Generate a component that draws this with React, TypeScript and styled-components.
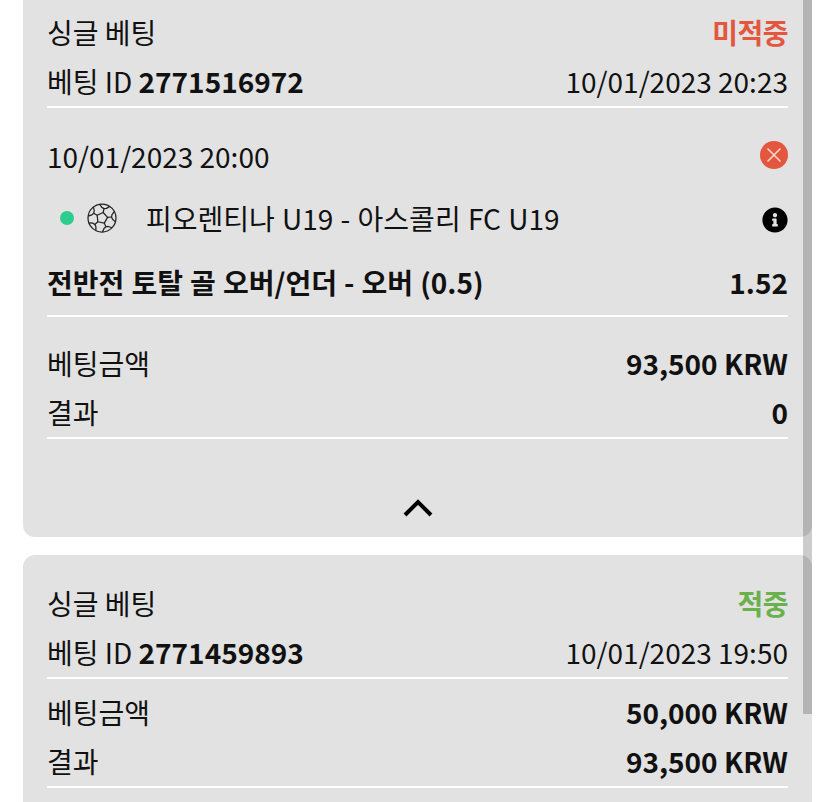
import React from "react";
import styled, { createGlobalStyle } from "styled-components";
import { FaInfoCircle } from "react-icons/fa";

const GlobalStyle = createGlobalStyle`
  html, body {
    margin: 0;
    padding: 0;
    background: #fff;
    height: 100%;
    overflow: hidden;
  }
  body {
    font-family: "Noto Sans CJK KR", "Noto Sans", sans-serif;
    color: #111;
  }
`;

const Page = styled.div`
  position: relative;
  width: 835px;
  height: 802px;
  overflow: hidden;
  padding-left: 23px;
  box-sizing: border-box;
`;

const ScrollThumb = styled.div`
  position: absolute;
  top: 0;
  left: 803px;
  width: 9px;
  height: 714px;
  background: rgba(0, 0, 0, 0.2);
`;

const Card = styled.section<{ $first?: boolean }>`
  width: 789px;
  box-sizing: border-box;
  background: #e2e2e2;
  border-radius: ${({ $first }) => ($first ? "0 0 12px 12px" : "12px 12px 0 0")};
  padding: ${({ $first }) => ($first ? "8px 24px 0" : "24px 24px 40px")};
  margin-bottom: 18px;
`;

const Row = styled.div<{ $height?: number }>`
  display: flex;
  align-items: center;
  justify-content: space-between;
  box-sizing: border-box;
  height: ${({ $height }) => $height ?? 49}px;
  padding-bottom: 2px;
  font-size: 28px;
  line-height: 1;
  white-space: nowrap;
`;

const Divider = styled.div`
  height: 2px;
  background: #fff;
`;

const Status = styled.span<{ $won?: boolean }>`
  font-weight: 700;
  letter-spacing: -0.5px;
  color: ${({ $won }) => ($won ? "#6ab04c" : "#e2573d")};
`;

const Bold = styled.b`
  font-weight: 700;
`;

const WideBold = styled(Bold)`
  word-spacing: 0.8px;
`;

const Events = styled.div`
  padding: 24px 0 5px;
`;

const Match = styled.div`
  display: flex;
  align-items: center;
  margin-left: 13px;
  word-spacing: 1px;
`;

const LiveDot = styled.span`
  width: 14px;
  height: 14px;
  border-radius: 50%;
  background: #2ecc8f;
  margin-right: 13px;
`;

const BallSvg = styled.svg`
  width: 30px;
  height: 30px;
  margin-right: 29px;
`;

const InfoIcon = styled(FaInfoCircle)`
  width: 26px;
  height: 26px;
  margin-top: 3px;
  color: #000;
`;

const LostSvg = styled.svg`
  margin-bottom: 3px;
`;

const Amounts = styled.div`
  padding-top: 22px;
`;

const CompactAmounts = styled.div`
  padding-top: 9px;
`;

const Toggle = styled.div`
  display: flex;
  justify-content: center;
  padding: 60px 0 20px;
`;

const polar = (radius: number, degrees: number) => {
  const a = (degrees * Math.PI) / 180;
  return `${(15 + radius * Math.cos(a)).toFixed(2)} ${(15 + radius * Math.sin(a)).toFixed(2)}`;
};

const SoccerBall = () => {
  const tilt = -78;
  const angles = [0, 72, 144, 216, 288].map((n) => n + tilt);
  const centre = "M" + angles.map((a) => polar(5.6, a)).join(" L") + " Z";
  const spokes = angles.map((a) => `M${polar(5.6, a)} L${polar(9.6, a)}`).join(" ");
  const patches = angles
    .map(
      (a) =>
        `M${polar(14, a - 22)} L${polar(10.6, a - 13)} L${polar(9.6, a)} L${polar(10.6, a + 13)} L${polar(14, a + 22)}`
    )
    .join(" ");
  return (
    <BallSvg viewBox="0 0 30 30" fill="none" stroke="#222" strokeWidth="1.25" strokeLinejoin="round">
      <circle cx="15" cy="15" r="14" />
      <path d={centre} />
      <path d={spokes} />
      <path d={patches} />
    </BallSvg>
  );
};

const LostIcon = () => (
  <LostSvg width="28" height="28" viewBox="0 0 28 28">
    <circle cx="14" cy="14" r="14" fill="#e2573d" />
    <path d="M7.5 7.5 L20.5 20.5 M20.5 7.5 L7.5 20.5" stroke="#f6d5cd" strokeWidth="1.6" />
  </LostSvg>
);

const ChevronIcon = () => (
  <svg width="30" height="18" viewBox="0 0 30 18">
    <path d="M2 16 L15 3 L28 16" fill="none" stroke="#000" strokeWidth="4" />
  </svg>
);

export default function App() {
  return (
    <Page>
      <GlobalStyle />
      <Card $first>
        <Row>
          <span>싱글 베팅</span>
          <Status>미적중</Status>
        </Row>
        <Row>
          <span>
            베팅 ID <Bold>2771516972</Bold>
          </span>
          <span>10/01/2023 20:23</span>
        </Row>
        <Divider />
        <Events>
          <Row $height={50}>
            <span>10/01/2023 20:00</span>
            <LostIcon />
          </Row>
          <Row $height={74}>
            <Match>
              <LiveDot />
              <SoccerBall />
              <span>피오렌티나 U19 - 아스콜리 FC U19</span>
            </Match>
            <InfoIcon />
          </Row>
          <Row $height={54}>
            <WideBold>전반전 토탈 골 오버/언더 - 오버 (0.5)</WideBold>
            <Bold>1.52</Bold>
          </Row>
        </Events>
        <Divider />
        <Amounts>
          <Row>
            <span>베팅금액</span>
            <Bold>93,500 KRW</Bold>
          </Row>
          <Row>
            <span>결과</span>
            <Bold>0</Bold>
          </Row>
        </Amounts>
        <Divider />
        <Toggle>
          <ChevronIcon />
        </Toggle>
      </Card>
      <Card>
        <Row>
          <span>싱글 베팅</span>
          <Status $won>적중</Status>
        </Row>
        <Row>
          <span>
            베팅 ID <Bold>2771459893</Bold>
          </span>
          <span>10/01/2023 19:50</span>
        </Row>
        <Divider />
        <CompactAmounts>
          <Row>
            <span>베팅금액</span>
            <Bold>50,000 KRW</Bold>
          </Row>
          <Row>
            <span>결과</span>
            <Bold>93,500 KRW</Bold>
          </Row>
        </CompactAmounts>
        <Divider />
      </Card>
      <ScrollThumb />
    </Page>
  );
}
